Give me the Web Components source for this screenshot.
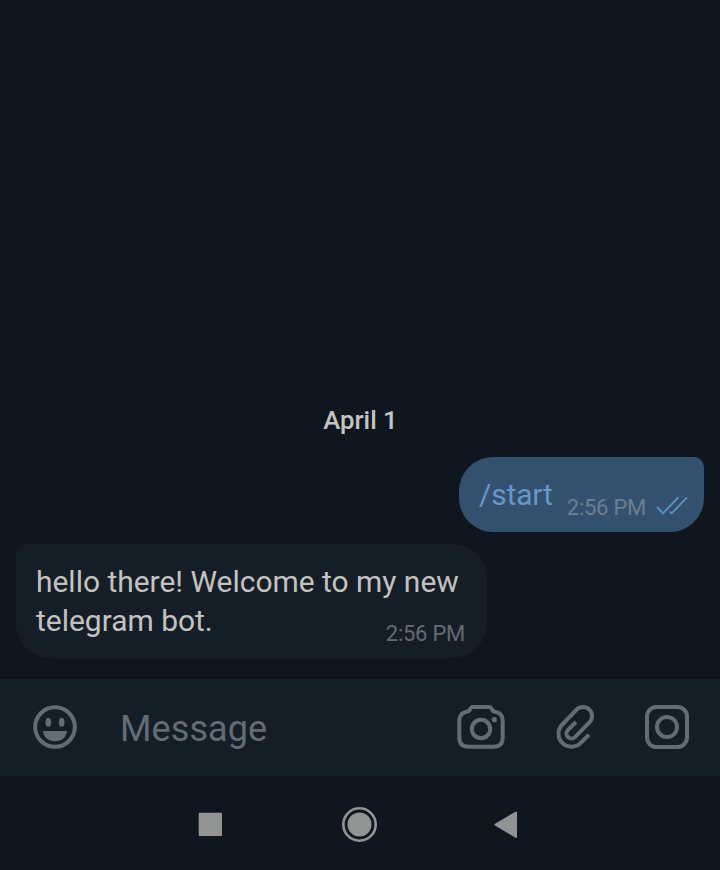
<!DOCTYPE html>
<html lang="en">
<head>
<meta charset="utf-8">
<title>Chat</title>
<style>
html,body{margin:0;height:100%;background:#0f161d}
body{font-family:Roboto,"Liberation Sans",sans-serif;overflow:hidden}
</style>
</head>
<body>
<chat-screen>
  <chat-date>April 1</chat-date>
  <chat-message kind="out" time="2:56 PM">/start</chat-message>
  <chat-message kind="in" time="2:56 PM">hello there! Welcome to my new<br>telegram bot.</chat-message>
  <chat-composer slot="composer" placeholder="Message"></chat-composer>
  <system-nav slot="nav"></system-nav>
</chat-screen>
<script>
class Base extends HTMLElement{
  constructor(){super();this.attachShadow({mode:'open'})}
  connectedCallback(){this.shadowRoot.innerHTML=this.view()}
}
customElements.define('chat-screen',class extends Base{
  view(){return `<style>
    :host{display:flex;flex-direction:column;width:720px;height:870px;background:#0f161d}
    main{flex:1;display:flex;flex-direction:column;justify-content:flex-end;gap:12px;padding:0 16px 19px}
  </style><main><slot></slot></main><slot name="composer"></slot><slot name="nav"></slot>`}
});
customElements.define('chat-date',class extends Base{
  view(){return `<style>
    :host{display:block;text-align:center;font-size:25.7px;line-height:32px;font-weight:500;color:#c4c4c3;padding:0 0 9px 1px}
  </style><slot></slot>`}
});
customElements.define('chat-message',class extends Base{
  view(){
    const out=this.getAttribute('kind')==='out';
    return `<style>
    :host{display:flex;box-sizing:border-box;align-self:flex-start;width:471px;height:114px;padding:18px 22px 11px 20px;border-radius:10px 34px 34px 34px;background:#151e26;color:#c4c2c0;justify-content:space-between}
    :host([kind=out]){align-self:flex-end;width:245px;height:75px;padding-right:16px;border-radius:34px 10px 34px 34px;background:#33506f;color:#6896c8}
    p{margin:0;font-size:29.95px;line-height:39px;white-space:nowrap;width:0}
    :host([kind=out]) p{letter-spacing:-.15px}
    footer{display:flex;align-items:flex-end;align-self:flex-end;gap:10px;color:#626b73;font-size:22px;letter-spacing:-.25px;line-height:26px;white-space:nowrap}
    :host([kind=out]) footer{color:#6a7f90}
    svg{display:block;width:32px;height:26px;margin-bottom:1px}
  </style><p><slot></slot></p><footer><span>${this.getAttribute('time')}</span>${out?`<svg viewBox="0 0 32 26" fill="none" stroke="#5b92c0" stroke-width="1.9"><path d="M1 13 7 19.3 22.3 3.4M13.8 17.6l1.9 1.7L31 3.4"/></svg>`:''}</footer>`}
});
customElements.define('chat-composer',class extends Base{
  view(){return `<style>
    :host{display:flex;box-sizing:border-box;align-items:center;height:99px;padding:0 29px 0 31px;border-top:1px solid #080c12;background:#151e27;color:#626c75}
    span{flex:1;font-size:36px;line-height:48px;margin:4px 0 0 41px;letter-spacing:.1px}
    svg{display:block;width:48px;height:48px;fill:none;stroke:currentColor;stroke-width:4}
    .camera{width:50px}
    .clip{width:42px;margin:0 48px 0 47px}
  </style>
  <svg viewBox="0 0 48 48"><circle cx="24" cy="24" r="19.8"/><g fill="currentColor" stroke="none"><ellipse cx="17.3" cy="19.3" rx="2.8" ry="4.5"/><ellipse cx="30.7" cy="19.3" rx="2.8" ry="4.5"/><path d="M12 28H36C35.3 34.2 31 38.3 24 38.3S12.7 34.2 12 28Z"/></g></svg>
  <span>${this.getAttribute('placeholder')}</span>
  <svg class="camera" viewBox="0 0 50 48"><path d="M17 4H33Q34.5 4 35.5 5.5L36.5 7.2Q37.3 8.3 39 8.7 46.7 10 46.7 17.5V34.5Q46.7 43.7 37.5 43.7H12.5Q3.3 43.7 3.3 34.5V17.5Q3.3 10 11 8.7 12.7 8.3 13.5 7.2L14.5 5.5Q15.5 4 17 4Z"/><circle cx="25" cy="26" r="9.2"/><circle cx="38.3" cy="16.7" r="2.6" fill="currentColor" stroke="none"/></svg>
  <svg class="clip" viewBox="0 0 42 48"><path d="M23 19 14.9 27.1A4.95 4.95 0 0 0 21.9 34.1L36.4 19.4A9.05 9.05 0 0 0 23.6 6.6L9.3 21.5A13 13 0 0 0 27.7 39.9L36 31.6"/></svg>
  <svg viewBox="0 0 48 48"><rect x="4" y="4" width="40" height="40" rx="9.5"/><circle cx="24" cy="24" r="10"/></svg>`}
});
customElements.define('system-nav',class extends Base{
  view(){return `<style>
    :host{display:block;height:94px;background:#10161e}
    svg{display:block}
  </style><svg width="720" height="94" fill="#929494"><rect x="198.7" y="36.8" width="23.3" height="23.2" rx="1"/><circle cx="359.5" cy="48.5" r="12"/><circle cx="359.5" cy="48.5" r="16.2" fill="none" stroke="#929494" stroke-width="2.6"/><path d="M495.5 48.7 516 36.5V61Z" stroke="#929494" stroke-width="2" stroke-linejoin="round"/></svg>`}
});
</script>
</body>
</html>
